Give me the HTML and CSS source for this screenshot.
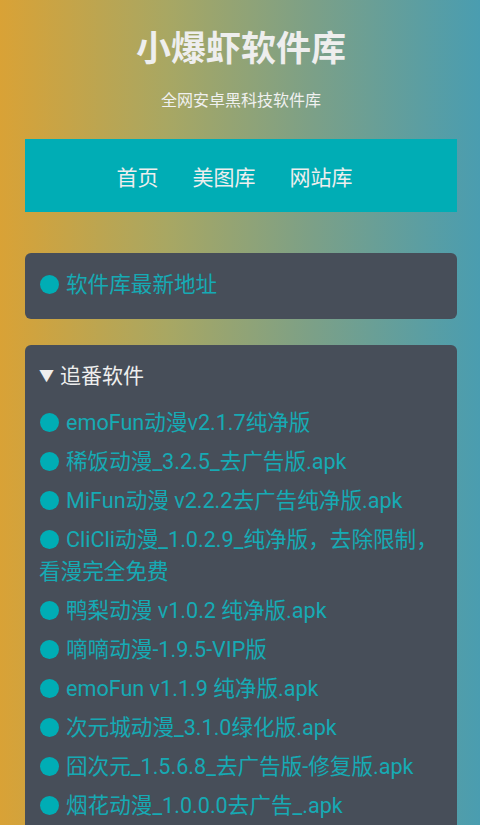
FILE: index.html
```html
<!DOCTYPE html>
<html lang="zh-CN">
<head>
    <meta charset="UTF-8">
    <meta name="viewport" content="width=device-width, initial-scale=1.0">
    <title>小爆虾软件库</title>
    <link rel="stylesheet" href="styles.css">
</head>
<body>
    <div class="header">
        <h1>小爆虾软件库</h1>
        <p class="subtitle">全网安卓黑科技软件库</p>
    </div>

    <nav class="nav">
        <a href="#">首页</a>
        <a href="#">美图库</a>
        <a href="#">网站库</a>
    </nav>

    <div class="card">
        <a class="item" href="#"><span class="dot"></span>软件库最新地址</a>
    </div>

    <div class="card">
        <div class="card-title"><span class="arrow">▼</span>追番软件</div>
        <a class="item" href="#"><span class="dot"></span>emoFun动漫v2.1.7纯净版</a>
        <a class="item" href="#"><span class="dot"></span>稀饭动漫_3.2.5_去广告版.apk</a>
        <a class="item" href="#"><span class="dot"></span>MiFun动漫 v2.2.2去广告纯净版.apk</a>
        <a class="item" href="#"><span class="dot"></span>CliCli动漫_1.0.2.9_纯净版，去除限制，看漫完全免费</a>
        <a class="item" href="#"><span class="dot"></span>鸭梨动漫 v1.0.2 纯净版.apk</a>
        <a class="item" href="#"><span class="dot"></span>嘀嘀动漫-1.9.5-VIP版</a>
        <a class="item" href="#"><span class="dot"></span>emoFun v1.1.9 纯净版.apk</a>
        <a class="item" href="#"><span class="dot"></span>次元城动漫_3.1.0绿化版.apk</a>
        <a class="item" href="#"><span class="dot"></span>囧次元_1.5.6.8_去广告版-修复版.apk</a>
        <a class="item" href="#"><span class="dot"></span>烟花动漫_1.0.0.0去广告_.apk</a>
    </div>
</body>
</html>
```

FILE: styles.css
```css
/* Basic Reset */
* {
    margin: 0;
    padding: 0;
    box-sizing: border-box;
}

body {
    font-family: 'Roboto', 'Noto Sans CJK SC', sans-serif;
    background: linear-gradient(90deg, #d9a236 0%, #a8a763 35%, #7ca087 65%, #4a9db0 100%);
    background-attachment: fixed;
    color: #eee;
    padding: 0 23px 0 25px;
    min-height: 100vh;
}

a {
    text-decoration: none;
    color: inherit;
}

.header {
    text-align: center;
    padding-top: 24px;
}

.header h1 {
    font-size: 35px;
    line-height: 52px;
    font-weight: bold;
    color: #eee;
}

.subtitle {
    margin-top: 13px;
    font-size: 16px;
    line-height: 24px;
    color: #f0f0f0;
}

.nav {
    margin-top: 26px;
    height: 73px;
    background: #00adb5;
    display: flex;
    justify-content: center;
    align-items: center;
    gap: 34px;
    padding-right: 13px;
}

.nav a {
    font-size: 21px;
    color: #eee;
}

.card {
    margin-top: 41px;
    background: #474e59;
    border-radius: 6px;
    padding: 16px 14px 18px;
}

.card + .card {
    margin-top: 26px;
    padding-top: 15px;
}

.card-title {
    font-size: 21px;
    line-height: 32px;
    color: #eee;
    margin-bottom: 15px;
}

.arrow {
    font-size: 15px;
    margin-right: 6px;
    vertical-align: 2px;
}

.item {
    display: block;
    font-size: 21.6px;
    line-height: 32px;
    color: #16aab4;
    margin-bottom: 7px;
}

.card .item:last-child {
    margin-bottom: 0;
}

.dot {
    display: inline-block;
    width: 19px;
    height: 19px;
    border-radius: 50%;
    background: #00adb5;
    margin: 0 7px 0 1px;
    vertical-align: -2px;
}
```
